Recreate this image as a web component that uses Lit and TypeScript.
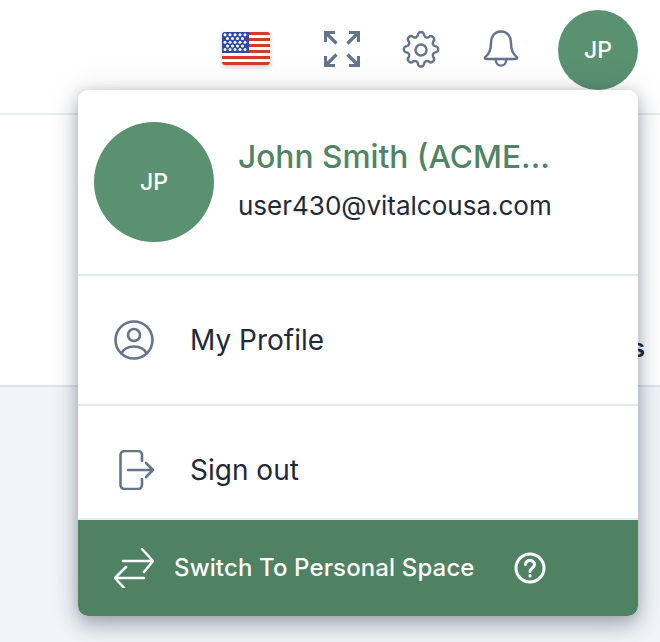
import { LitElement, html, css, svg } from "lit";
import { customElement } from "lit/decorators.js";

@customElement("app-root")
export class AppRoot extends LitElement {
  static styles = css`
    :host { display: block; position: relative; width: 660px; height: 642px; overflow: hidden; background: #f1f5f9; font-family: Inter, "Noto Sans", sans-serif; color: #1e293b; }
    * { box-sizing: border-box; }
    .topbar { height: 115px; background: #fff; border-bottom: 2px solid #e9ecf1; display: flex; align-items: flex-start; justify-content: flex-end; padding: 10px 22px 0 0; }
    .flag { width: 48px; height: 33px; margin: 22px 54px 0 0; border-radius: 3px; box-shadow: 0 2px 5px rgba(0,0,0,.2); display: block; flex: none; }
    .ico { display: block; fill: none; stroke: #64748b; stroke-linecap: round; stroke-linejoin: round; flex: none; }
    .expand { margin: 21px 39px 0 0; }
    .gear { margin: 18px 39px 0 0; }
    .bell { margin: 19px 38px 0 0; }
    .avatar { border-radius: 50%; background: #5a9171; color: #fff; display: flex; align-items: center; justify-content: center; font-weight: 500; font-size: 23px; flex: none; }
    .avatar.sm { width: 80px; height: 80px; }
    .avatar.lg { width: 120px; height: 120px; }
    .band { height: 272px; background: #fff; border-bottom: 2px solid #dfe3ec; display: flex; justify-content: flex-end; align-items: flex-end; padding: 0 15px 22px 0; font-size: 25px; line-height: 30px; font-weight: 600; }
    .shadow { position: absolute; left: 78px; top: 90px; width: 560px; height: 526px; border-radius: 10px; box-shadow: 0 10px 20px rgba(30,41,59,.3), 0 0 12px rgba(30,41,59,.12), 0 0 36px rgba(30,41,59,.1); }
    .menu { position: absolute; left: 78px; top: 90px; width: 560px; height: 526px; background: #fff; border-radius: 10px; overflow: hidden; display: flex; flex-direction: column; }
    .who { height: 186px; border-bottom: 2px solid #e2e8f0; display: flex; align-items: flex-start; gap: 24px; padding: 32px 0 0 16px; flex: none; }
    .names { padding-top: 15px; min-width: 0; }
    .name { font-size: 31.7px; line-height: 40px; font-weight: 500; color: #4f8465; white-space: nowrap; }
    .mail { font-size: 26px; line-height: 32px; margin-top: 13px; white-space: nowrap; }
    .row { display: flex; align-items: center; font-size: 28px; line-height: 36px; padding-left: 36px; gap: 36px; flex: none; }
    .profile { height: 130px; border-bottom: 2px solid #e2e8f0; }
    .signout { height: 114px; border-bottom: 2px solid #e7ebf2; padding-top: 15px; padding-left: 41px; gap: 35px; }
    .switch { flex: 1; background: #4f8163; color: #fff; display: flex; align-items: center; padding-left: 36px; font-size: 24px; font-weight: 500; letter-spacing: .13px; }
    .switch span { margin: 0 39px 2px 20px; white-space: nowrap; }
    .wh { fill: none; stroke: #fff; stroke-linecap: round; stroke-linejoin: round; display: block; flex: none; }
  `;

  render() {
    const stars = [];
    for (let r = 0; r < 5; r++) for (let c = 0; c < (r % 2 ? 4 : 5); c++)
      stars.push(svg`<circle cx=${(r % 2 ? 5.5 : 3) + c * 5} cy=${2.8 + r * 3.7} r="1.500" fill="#fff" />`);
    return html`
      <div class="topbar">
        <svg class="flag" viewBox="0 0 48 33">
          <rect width="48" height="33" fill="#fff" rx="3" />
          <g fill="#d6392c">
            <rect x="27" y="0" width="21" height="3" />
            <rect x="27" y="6" width="21" height="3" />
            <rect x="27" y="12" width="21" height="3" />
            <rect x="27" y="18" width="21" height="3" />
            <rect x="0" y="24" width="48" height="3" />
            <rect x="0" y="30" width="48" height="3" />
          </g>
          <rect width="27" height="21" fill="#2f4a9e" />
          ${stars}
        </svg>
        <svg class="ico expand" width="36" height="36" viewBox="0 0 36 36" stroke-width="3.200">
          <path d="M1.500 11V1.500H11M1.500 1.500l11 11M25 1.500h9.500V11M34.500 1.500l-11 11M1.500 25v9.500H11M1.500 34.500l11-11M34.500 25v9.500H25M34.500 34.500l-11-11" stroke-linecap="butt" stroke-linejoin="miter" />
        </svg>
        <svg class="ico gear" width="44" height="44" viewBox="0 0 24 24" stroke-width="1.300">
          <path d="M10.3 3.900a1.700 1.700 0 0 1 3.400 0 1.700 1.700 0 0 0 2.600 1 1.700 1.700 0 0 1 2.400 2.400 1.700 1.700 0 0 0 1 2.600 1.700 1.700 0 0 1 0 3.400 1.700 1.700 0 0 0-1 2.600 1.700 1.700 0 0 1-2.400 2.400 1.700 1.700 0 0 0-2.600 1 1.700 1.700 0 0 1-3.400 0 1.700 1.700 0 0 0-2.600-1 1.700 1.700 0 0 1-2.400-2.400 1.700 1.700 0 0 0-1-2.600 1.700 1.700 0 0 1 0-3.400 1.700 1.700 0 0 0 1-2.600 1.700 1.700 0 0 1 2.400-2.400 1.700 1.700 0 0 0 2.600-1z" />
          <circle cx="12" cy="12" r="3" />
        </svg>
        <svg class="ico bell" width="38" height="40" viewBox="0 0 40 40" stroke-width="2.600">
          <path d="M20 1.500c-7 0-10.500 5.500-10.500 12 0 8-2 11-6.500 15.500 0 1 1 1.500 2 1.500h30c1 0 2-.5 2-1.500-4.500-4.500-6.500-7.500-6.500-15.500 0-6.500-3.500-12-10.500-12z" />
          <path d="M14.500 31c0 4 2.500 6.500 5.500 6.500s5.500-2.500 5.500-6.500" />
        </svg>
        <div class="avatar sm">JP</div>
      </div>
      <div class="band">s</div>
      <div class="shadow"></div>
      <div class="menu">
        <div class="who">
          <div class="avatar lg">JP</div>
          <div class="names">
            <div class="name">John Smith (ACME...</div>
            <div class="mail">user430@vitalcousa.com</div>
          </div>
        </div>
        <div class="row profile">
          <svg class="ico" width="40" height="40" viewBox="0 0 40 40" stroke-width="2.600">
            <circle cx="20" cy="20" r="18.500" />
            <circle cx="20" cy="15" r="6" />
            <path d="M7.500 33.500C10 28 15 26.500 20 26.500s10 1.500 12.500 7" />
          </svg>
          <div>My Profile</div>
        </div>
        <div class="row signout">
          <svg class="ico" width="36" height="40" viewBox="0 0 36 40" stroke-width="2.600">
            <path d="M23 11V5c0-2.200-1.800-4-4-4H6C3 1 1.500 3 1.500 5v30c0 2 1.500 4 4.500 4h13c2.200 0 4-1.800 4-4v-6" />
            <path d="M9 20h25M27 13l7 7-7 7" />
          </svg>
          <div>Sign out</div>
        </div>
        <div class="switch">
          <svg class="wh" width="40" height="40" viewBox="0 0 40 40" stroke-width="2.500">
            <path d="M9 13h29M28 1l11 12-9 11M30 30H2M12 19L1 30l11 12" />
          </svg>
          <span>Switch To Personal Space</span>
          <svg class="wh" width="32" height="32" viewBox="0 0 32 32" stroke-width="3">
            <circle cx="16" cy="16" r="14" />
            <path d="M11.500 12.500c0-2.500 2-4 4.500-4s4.500 1.500 4.500 4c0 3.500-4.500 3.500-4.500 7" />
            <path d="M16 23.500v.5" />
          </svg>
        </div>
      </div>
    `;
  }
}
